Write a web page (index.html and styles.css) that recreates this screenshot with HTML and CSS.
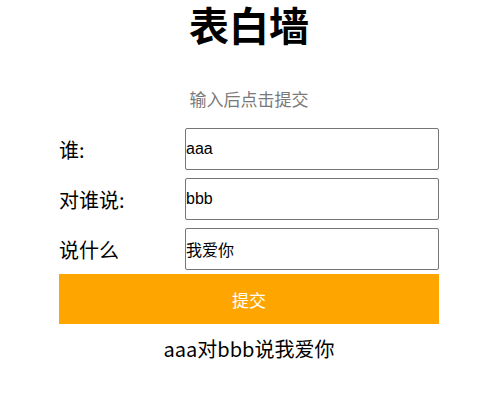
FILE: index.html
```html
<!DOCTYPE html>
<html lang="zh">
<head>
<meta charset="utf-8">
<link rel="stylesheet" href="styles.css">
</head>
<body>
<div class="container">
  <h1 class="title">表白墙</h1>
  <p class="hint">输入后点击提交</p>
  <div class="row"><span class="label">谁:</span><input class="field" type="text" value="aaa"></div>
  <div class="row"><span class="label">对谁说:</span><input class="field" type="text" value="bbb"></div>
  <div class="row"><span class="label">说什么</span><input class="field" type="text" value="我爱你"></div>
  <button class="submit">提交</button>
  <div class="message">aaa对bbb说我爱你</div>
</div>
</body>
</html>
```

FILE: styles.css
```css
html, body {
  background: #fff;
}
body {
  margin: 0 8px 0 12px;
  font-family: "Noto Sans CJK SC", sans-serif;
  color: #000;
}
.container {
  width: 380px;
  margin: 0 auto;
  display: flex;
  flex-direction: column;
}
.title {
  margin: 0;
  font-size: 40px;
  line-height: 48px;
  text-align: center;
  font-weight: bold;
}
.hint {
  margin: 39px 0 0;
  font-size: 17px;
  line-height: 24px;
  color: #7a7a7a;
  text-align: center;
}
.row {
  display: flex;
  align-items: center;
  height: 42px;
  margin-top: 8px;
}
.hint + .row {
  margin-top: 17px;
}
.label {
  width: 126px;
  font-size: 20px;
}
.field {
  box-sizing: border-box;
  width: 254px;
  height: 42px;
  margin: 0;
  padding: 0;
  border: 1px solid #767676;
  border-radius: 2px;
  font-family: "Liberation Sans", "Noto Sans CJK SC", sans-serif;
  font-size: 16px;
  color: #000;
}
.submit {
  margin-top: 4px;
  height: 50px;
  border: none;
  background: #ffa500;
  color: #fff;
  font-family: "Noto Sans CJK SC", sans-serif;
  font-size: 17px;
}
.message {
  margin-top: 10px;
  font-size: 20px;
  line-height: 30px;
  text-align: center;
}
```
